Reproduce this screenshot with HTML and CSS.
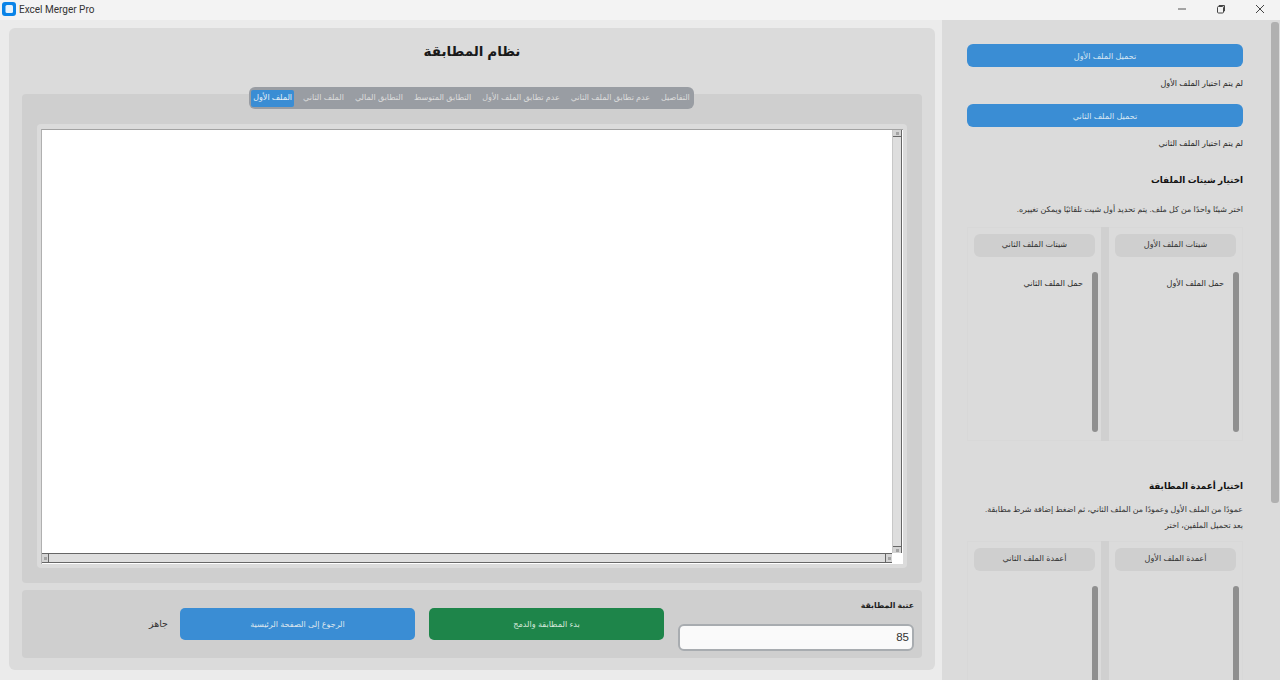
FILE: index.html
```html
<!DOCTYPE html>
<html lang="ar">
<head>
<meta charset="utf-8">
<title>Excel Merger Pro</title>
<link rel="stylesheet" href="styles.css">
</head>
<body>
<header class="titlebar">
  <div class="app">
    <svg class="app-icon" width="14" height="14" viewBox="0 0 14 14"><rect width="14" height="14" rx="3" fill="#0a84e8"/><rect x="3.5" y="3" width="7.5" height="8" rx="1.5" fill="#e8f3fc"/></svg>
    <span class="app-name">Excel Merger Pro</span>
  </div>
  <div class="win-controls">
    <svg class="win-btn" width="10" height="10" viewBox="0 0 10 10"><path d="M1 5h8" stroke="#555" stroke-width="1"/></svg>
    <svg class="win-btn" width="10" height="10" viewBox="0 0 10 10"><path d="M3 2.5V1.5h5.5V7H7.5" fill="none" stroke="#444" stroke-width="1"/><rect x="1.5" y="2.5" width="6" height="6.5" rx="1" fill="none" stroke="#444" stroke-width="1"/></svg>
    <svg class="win-btn" width="10" height="10" viewBox="0 0 10 10"><path d="M1 1l8 8M9 1l-8 8" stroke="#444" stroke-width="1"/></svg>
  </div>
</header>
<div class="main">
  <main class="card">
    <h1 class="title" dir="rtl">نظام المطابقة</h1>
    <nav class="tabs" dir="ltr">
      <span class="tab active">الملف الأول</span>
      <span class="tab">الملف الثاني</span>
      <span class="tab">التطابق المالي</span>
      <span class="tab">التطابق المتوسط</span>
      <span class="tab">عدم تطابق الملف الأول</span>
      <span class="tab">عدم تطابق الملف الثاني</span>
      <span class="tab">التفاصيل</span>
    </nav>
    <section class="tab-panel">
      <div class="table-frame">
        <div class="table-grid">
          <div class="table-view"></div>
          <div class="vscroll"><span class="sb-btn"></span><span class="sb-track"></span><span class="sb-btn"></span></div>
          <div class="hscroll"><span class="sb-btn"></span><span class="sb-track"></span><span class="sb-btn"></span></div>
          <div class="corner"></div>
        </div>
      </div>
    </section>
    <section class="actions" dir="rtl">
      <div class="threshold">
        <label class="threshold-label">عتبة المطابقة</label>
        <div class="threshold-input">85</div>
      </div>
      <button class="btn green">بدء المطابقة والدمج</button>
      <button class="btn blue">الرجوع إلى الصفحة الرئيسية</button>
      <span class="status">جاهز</span>
    </section>
  </main>
  <aside class="sidebar">
    <div class="side-content" dir="rtl">
      <button class="load-btn">تحميل الملف الأول</button>
      <p class="file-note">لم يتم اختيار الملف الأول</p>
      <button class="load-btn second">تحميل الملف الثاني</button>
      <p class="file-note">لم يتم اختيار الملف الثاني</p>
      <h2 class="side-head sheets">اختيار شيتات الملفات</h2>
      <p class="hint sheets-hint">اختر شيتًا واحدًا من كل ملف. يتم تحديد أول شيت تلقائيًا ويمكن تغييره.</p>
      <div class="split sheets-split">
        <div class="pane">
          <div class="pane-head">شيتات الملف الأول</div>
          <div class="pane-body"><span class="pane-text">حمل الملف الأول</span><span class="pane-bar"></span></div>
        </div>
        <div class="splitter"></div>
        <div class="pane">
          <div class="pane-head">شيتات الملف الثاني</div>
          <div class="pane-body"><span class="pane-text">حمل الملف الثاني</span><span class="pane-bar"></span></div>
        </div>
      </div>
      <h2 class="side-head cols">اختيار أعمدة المطابقة</h2>
      <p class="hint cols-hint"><span class="hint-line">عمودًا من الملف الأول وعمودًا من الملف الثاني، ثم اضغط إضافة شرط مطابقة.</span><span class="hint-line">بعد تحميل الملفين، اختر</span></p>
      <div class="split cols-split">
        <div class="pane">
          <div class="pane-head">أعمدة الملف الأول</div>
          <div class="pane-body"><span class="pane-text"></span><span class="pane-bar"></span></div>
        </div>
        <div class="splitter"></div>
        <div class="pane">
          <div class="pane-head">أعمدة الملف الثاني</div>
          <div class="pane-body"><span class="pane-text"></span><span class="pane-bar"></span></div>
        </div>
      </div>
    </div>
    <div class="side-scroll"><span class="side-thumb"></span></div>
  </aside>
</div>
</body>
</html>
```
FILE: styles.css
```css
* { box-sizing: border-box; }
html, body { margin: 0; height: 680px; overflow: hidden; }
body {
  display: flex;
  flex-direction: column;
  background: #ebebeb;
  font-family: "Liberation Sans", "DejaVu Sans", sans-serif;
  color: #222;
}
.titlebar {
  flex: 0 0 20px;
  display: flex;
  justify-content: space-between;
  align-items: center;
  padding-bottom: 2px;
  background: #f3f3f3;
}
.app { display: flex; align-items: center; gap: 3px; padding-left: 2px; }
.app-name { font: 10px Roboto, sans-serif; color: #333; }
.win-controls { display: flex; gap: 29px; padding-right: 15px; }
.win-btn { display: block; }
.main { flex: 1; display: flex; min-height: 0; }
.card {
  width: 926px;
  margin: 8px 7px 10px 9px;
  padding: 0 13px 12px;
  background: #dbdbdb;
  border-radius: 6px;
  display: flex;
  flex-direction: column;
}
.title {
  margin: 0;
  height: 59px;
  padding-top: 12px;
  text-align: center;
  font-size: 13.5px;
  line-height: 24px;
  color: #1a1a1a;
}
.tabs {
  align-self: center;
  position: relative;
  z-index: 1;
  display: flex;
  align-items: center;
  height: 22px;
  margin-bottom: -15px;
  margin-left: -1px;
  padding: 0 2px;
  background: #999da3;
  border-radius: 6px;
}
.tab {
  height: 17px;
  padding: 0 2px;
  margin-right: 7px;
  font-size: 8px;
  line-height: 15px;
  color: #dcdcdc;
  white-space: nowrap;
  border-radius: 2px;
}
.tab:last-child { margin-right: 0; }
.tab.active { background: #3a8dd4; color: #e8f1f8; }
.tab-panel {
  height: 489px;
  padding: 30px 15px 15px;
  background: #cfcfcf;
  border-radius: 4px;
}
.table-frame {
  height: 444px;
  padding: 5px 4px 4px;
  background: #dbdbdb;
  border-radius: 4px;
}
.table-grid {
  height: 435px;
  display: grid;
  grid-template-columns: 1fr 11px;
  grid-template-rows: 1fr 11px;
  background: #fff;
  border-top: 1px solid #a2a2a2;
  border-left: 1px solid #b0b0b0;
}
.table-view { background: #fff; }
.vscroll, .hscroll { display: flex; background: #dcdcdc; }
.vscroll { flex-direction: column; border-left: 1px solid #c8c8c8; border-right: 1px solid #666; margin-right: 1px; }
.hscroll { border-top: 1px solid #666; border-bottom: 1px solid #666; margin-bottom: 1px; }
.sb-track { flex: 1; background: #dedede; }
.sb-btn { display: flex; align-items: center; justify-content: center; background: #d4d4d4; }
.sb-btn::before { content: ""; width: 3px; height: 3px; background: #a4a4a4; }
.vscroll .sb-btn { height: 7px; border-bottom: 1px solid #666; }
.vscroll .sb-btn:last-child { border-bottom: 0; border-top: 1px solid #666; }
.hscroll .sb-btn { width: 7px; border-right: 1px solid #666; }
.hscroll .sb-btn:last-child { border-right: 0; border-left: 1px solid #666; }
.corner { background: #fff; }
.actions {
  margin-top: 7px;
  height: 68px;
  padding: 0 8px;
  background: #cfcfcf;
  border-radius: 4px;
  display: flex;
  align-items: flex-start;
}
.threshold { width: 236px; margin-left: 14px; }
.threshold-label {
  display: block;
  height: 34px;
  padding-top: 9px;
  font-size: 7.8px;
  line-height: 14px;
  font-weight: bold;
  color: #1c1c1c;
}
.threshold-input {
  height: 27px;
  padding: 0 3px;
  background: #fafafa;
  border: 2px solid #a8acb0;
  border-radius: 6px;
  font-size: 11.5px;
  line-height: 23px;
  color: #333;
  text-align: right;
  direction: ltr;
}
.btn {
  width: 235px;
  height: 32px;
  margin-top: 18px;
  border: 0;
  border-radius: 5px;
  font-family: inherit;
  font-size: 8.1px;
  color: #dde6ee;
}
.btn.green { background: #1e854a; margin-left: 14px; color: #d6e8dc; }
.btn.blue { background: #3a8dd4; margin-left: 12px; }
.status { font-size: 9.5px; line-height: 14px; margin-top: 27px; color: #333; }
.sidebar {
  flex: 0 0 338px;
  background: #dbdbdb;
  display: flex;
  overflow: hidden;
}
.side-content { width: 329px; padding: 24px 28px 0 25px; flex: 0 0 auto; }
.side-scroll { flex: 1; padding: 2px 1px 0 0; }
.side-thumb { display: block; width: 8px; height: 481px; background: #b0b0b0; border-radius: 3px; }
.load-btn {
  display: block;
  width: 276px;
  height: 23px;
  border: 0;
  padding: 0;
  border-radius: 6px;
  background: #3a8dd4;
  color: #d6e6f3;
  font-family: inherit;
  font-size: 8.1px;
}
.load-btn.second { margin-top: 10px; }
.file-note { margin: 10px 0 0; height: 17px; font-size: 8.1px; line-height: 14px; color: #2a2a2a; }
.side-head { margin: 0; font-size: 8.8px; line-height: 16px; font-weight: bold; color: #111; }
.side-head.sheets { margin-top: 18px; }
.side-head.cols { margin-top: 37px; }
.hint { margin: 0; font-size: 7.95px; line-height: 16px; color: #333; }
.hint-line { display: block; }
.sheets-hint { margin-top: 14px; }
.cols-hint { margin-top: 8px; }
.split {
  display: flex;
  border: 1px solid #d8d8d8;
  width: 276px;
}
.sheets-split { height: 214px; margin-top: 9px; }
.cols-split { height: 215px; margin-top: 7px; }
.pane { flex: 1; padding: 6px 6px 0 6px; display: flex; flex-direction: column; min-width: 0; }
.pane-head {
  height: 23px;
  background: #cfcfcf;
  border-radius: 6px;
  text-align: center;
  font-size: 8.1px;
  line-height: 22px;
  color: #333;
}
.pane-body { flex: 1; display: flex; justify-content: flex-start; padding: 15px 0 8px; margin-right: -3px; min-height: 0; }
.pane-bar { width: 6px; background: #8f8f8f; border-radius: 3px; }
.pane-text { order: 2; margin-right: 9px; padding-top: 5px; font-size: 8.1px; line-height: 14px; color: #2a2a2a; }
.splitter { flex: 0 0 8px; background: #d0d0d0; margin: -1px 0; }
```
